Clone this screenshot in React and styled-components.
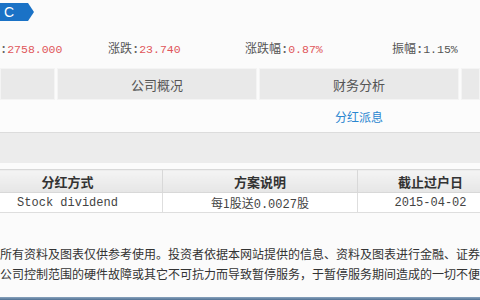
import React from 'react';
import styled, { createGlobalStyle } from 'styled-components';

const GlobalStyle = createGlobalStyle`
  body {
    margin: 0;
    background: #fff;
    font-family: "Noto Sans CJK SC", "DejaVu Sans", sans-serif;
    font-size: 12px;
    color: #333;
  }
`;

const StyledPage = styled.div`
  width: 480px;
  height: 300px;
  overflow: hidden;
  display: flex;
  flex-direction: column;
  background: #fbfbfb;
`;

const StyledHeader = styled.div`
  height: 28px;
  padding-top: 3px;
  box-sizing: border-box;
`;

const StyledBadge = styled.div`
  width: 34px;
  height: 18px;
  background: #1a72c6;
  color: #fff;
  font-family: "Liberation Sans", sans-serif;
  font-size: 14px;
  line-height: 18px;
  padding-left: 4px;
  box-sizing: border-box;
  clip-path: polygon(0 0, 28px 0, 34px 50%, 28px 100%, 0 100%);
`;

const StyledQuoteRow = styled.div`
  display: grid;
  grid-template-columns: 108px 137px 147px 1fr;
  height: 40px;
  align-items: center;
  box-sizing: border-box;
`;

const StyledQuote = styled.div`
  color: #555;
  font-size: 12px;
  white-space: nowrap;
`;

const StyledSep = styled.span`
  font-family: "Liberation Mono", monospace;
  font-size: 12px;
  font-weight: bold;
  color: #666;
`;

const StyledNumber = styled.span`
  font-family: "Liberation Mono", monospace;
  font-size: 11.5px;
  color: ${(p) => (p.$plain ? '#555' : '#e0555a')};
`;

const StyledTabs = styled.div`
  display: grid;
  grid-template-columns: 55px 200px 200px 1fr;
  gap: 2px;
  height: 32px;
`;

const StyledTab = styled.div`
  background: #e9e9e9;
  border: 1px solid #f4f4f4;
  display: flex;
  align-items: center;
  justify-content: center;
  color: #555;
  font-size: 13px;
`;

const StyledSubNav = styled.div`
  display: grid;
  grid-template-columns: 55px 200px 200px 1fr;
  gap: 2px;
  height: 33px;
  align-items: center;
  border-bottom: 1px solid #dcdcdc;
  box-sizing: border-box;
  background: #fcfcfc;
`;

const StyledSubLink = styled.div`
  grid-column: 3;
  text-align: center;
  color: #2a86d0;
  font-size: 12px;
`;

const StyledBand = styled.div`
  height: 30px;
  background: #ececec;
`;

const StyledTable = styled.table`
  margin: 6px 0 0 -28px;
  border-collapse: collapse;
  table-layout: fixed;
  width: 531px;
  background: #fff;
`;

const StyledTh = styled.th`
  height: 22px;
  padding: 0;
  background: linear-gradient(#f4f4f4, #e6e6e6);
  border: 1px solid #d8d8d8;
  color: #333;
  font-size: 13px;
  font-weight: bold;
`;

const StyledTd = styled.td`
  height: 19px;
  padding: 0;
  border: 1px solid #dedede;
  text-align: center;
  color: #444;
  font-size: 12px;
  font-family: ${(p) => (p.$mono ? '"Liberation Mono", monospace' : 'inherit')};
`;

const StyledMono = styled.span`
  font-family: "Liberation Mono", monospace;
  font-size: 12px;
`;

const StyledDisclaimer = styled.div`
  margin-top: 31px;
  font-size: 12px;
  line-height: 20px;
  color: #333;
  white-space: nowrap;
  flex: 1;
`;

const StyledBottomBar = styled.div`
  height: 3px;
  background: linear-gradient(#8aa4bd, #4f6f92);
`;

const Quote = ({ label, value, plain }) => (
  <StyledQuote>
    {label}
    <StyledSep>:</StyledSep>
    <StyledNumber $plain={plain}>{value}</StyledNumber>
  </StyledQuote>
);

export default function App() {
  return (
    <>
      <GlobalStyle />
      <StyledPage>
        <StyledHeader>
          <StyledBadge>C</StyledBadge>
        </StyledHeader>
        <StyledQuoteRow>
          <Quote label="" value="2758.000" />
          <Quote label="涨跌" value="23.740" />
          <Quote label="涨跌幅" value="0.87%" />
          <Quote label="振幅" value="1.15%" plain />
        </StyledQuoteRow>
        <StyledTabs>
          <StyledTab />
          <StyledTab>公司概况</StyledTab>
          <StyledTab>财务分析</StyledTab>
          <StyledTab />
        </StyledTabs>
        <StyledSubNav>
          <StyledSubLink>分红派息</StyledSubLink>
        </StyledSubNav>
        <StyledBand />
        <StyledTable>
          <colgroup>
            <col style={{ width: '190px' }} />
            <col style={{ width: '195px' }} />
            <col style={{ width: '146px' }} />
          </colgroup>
          <thead>
            <tr>
              <StyledTh>分红方式</StyledTh>
              <StyledTh>方案说明</StyledTh>
              <StyledTh>截止过户日</StyledTh>
            </tr>
          </thead>
          <tbody>
            <tr>
              <StyledTd $mono>Stock dividend</StyledTd>
              <StyledTd>
                每1股送<StyledMono>0.0027</StyledMono>股
              </StyledTd>
              <StyledTd $mono>2015-04-02</StyledTd>
            </tr>
          </tbody>
        </StyledTable>
        <StyledDisclaimer>
          所有资料及图表仅供参考使用。投资者依据本网站提供的信息、资料及图表进行金融、证券
          <br />
          公司控制范围的硬件故障或其它不可抗力而导致暂停服务，于暂停服务期间造成的一切不便
        </StyledDisclaimer>
        <StyledBottomBar />
      </StyledPage>
    </>
  );
}
